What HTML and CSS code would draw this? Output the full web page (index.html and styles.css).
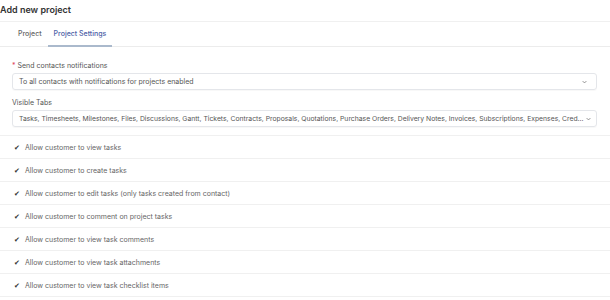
FILE: index.html
```html
<!DOCTYPE html>
<html>
<head>
  <title>Add new project</title>
  <link rel="stylesheet" href="styles.css">
</head>
<body>
  <div class="modal">
    <h4 class="modal-title">Add new project</h4>

    <div class="tabs">
      <a class="tab">Project</a>
      <a class="tab active">Project Settings</a>
    </div>

    <div class="tab-body">
      <div class="form-group">
        <label><span class="req">*</span> Send contacts notifications</label>
        <div class="select">
          <span class="select-text">To all contacts with notifications for projects enabled</span>
          <svg class="caret" viewBox="0 0 8 5" width="5" height="4"><path d="M1 1l3 3 3-3" fill="none" stroke="#666" stroke-width="1.1"/></svg>
        </div>
      </div>

      <div class="form-group">
        <label>Visible Tabs</label>
        <div class="select">
          <span class="select-text short">Tasks, Timesheets, Milestones, Files, Discussions, Gantt, Tickets, Contracts, Proposals, Quotations, Purchase Orders, Delivery Notes, Invoices, Subscriptions, Expenses, Cred...</span>
          <svg class="caret" viewBox="0 0 8 5" width="5" height="4"><path d="M1 1l3 3 3-3" fill="none" stroke="#666" stroke-width="1.1"/></svg>
        </div>
      </div>
    </div>

    <div class="checklist">
      <div class="check-row"><span class="check">✔</span>Allow customer to view tasks</div>
      <div class="check-row"><span class="check">✔</span>Allow customer to create tasks</div>
      <div class="check-row"><span class="check">✔</span>Allow customer to edit tasks (only tasks created from contact)</div>
      <div class="check-row"><span class="check">✔</span>Allow customer to comment on project tasks</div>
      <div class="check-row"><span class="check">✔</span>Allow customer to view task comments</div>
      <div class="check-row"><span class="check">✔</span>Allow customer to view task attachments</div>
      <div class="check-row"><span class="check">✔</span>Allow customer to view task checklist items</div>
    </div>
  </div>
</body>
</html>
```

FILE: styles.css
```css
body {
  margin: 0;
  background-color: #fff;
  font-family: Inter, "Noto Sans", sans-serif;
  color: #555;
  overflow: hidden;
}
.modal-title {
  margin: 0;
  height: 21px;
  line-height: 20px;
  font-size: 9px;
  font-weight: 600;
  color: #333;
  border-bottom: 1px solid #f0f0f0;
}
.tabs {
  display: flex;
  padding-left: 12px;
  border-bottom: 1px solid #ececec;
}
.tab {
  padding: 0 6px;
  height: 24px;
  line-height: 24px;
  font-size: 7px;
  font-weight: 500;
  color: #666;
  margin-bottom: -1px;
  border-bottom: 1px solid transparent;
}
.tab.active {
  color: #4b5ea6;
  border-bottom: 2px solid #aab9cc;
  height: 23px;
}
.tab-body {
  padding: 14px 13px 8px 12px;
}
.form-group + .form-group {
  margin-top: 8px;
}
label {
  display: block;
  font-size: 7px;
  line-height: 10px;
  margin-bottom: 2px;
  color: #555;
}
.req {
  color: #e0425c;
}
.select {
  display: flex;
  align-items: center;
  height: 15px;
  padding: 0 9px 0 6px;
  border: 1px solid #e4e6ea;
  border-radius: 3px;
  box-shadow: 0 1px 1px rgba(0, 0, 0, 0.03);
  font-size: 7px;
  color: #555;
}
.select-text {
  flex: 1;
  white-space: nowrap;
}
.select-text.short {
  flex: none;
  font-size: 6.8px;
}
.caret {
  margin-left: auto;
  flex: none;
}
.select-text.short + .caret {
  margin-left: 2px;
}
.checklist {
  border-top: 1px solid #f0f0f0;
}
.check-row {
  display: flex;
  align-items: center;
  height: 22px;
  padding-left: 14px;
  border-bottom: 1px solid #f0f0f0;
  font-size: 7px;
  color: #666;
}
.check {
  width: 11px;
  font-size: 7px;
  color: #333;
}
```
